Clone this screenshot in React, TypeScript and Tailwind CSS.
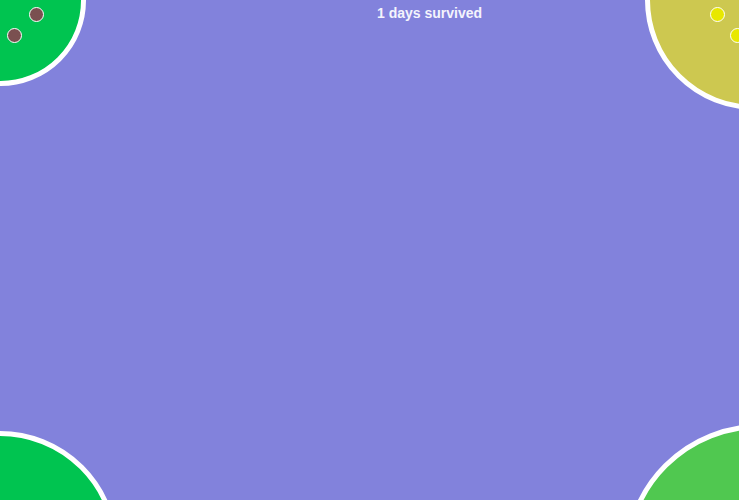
import React from 'react'

interface Blob {
  key: string
  className: string
}

const blobs: Blob[] = [
  { key: 'tl', className: 'left-[-85px] top-[-85px] w-[171px] h-[171px] bg-[#00c450]' },
  { key: 'tr', className: 'left-[645px] top-[-110px] w-[220px] h-[220px] bg-[#cdc850]' },
  { key: 'bl', className: 'left-[-118px] top-[431px] w-[236px] h-[236px] bg-[#00c450]' },
  { key: 'br', className: 'left-[624px] top-[424px] w-[272px] h-[272px] bg-[#50c850]' },
]

const dots = [
  { key: 'a', className: 'left-[29px] top-[7px] bg-[#7a5050]' },
  { key: 'b', className: 'left-[7px] top-[28px] bg-[#7a5050]' },
  { key: 'c', className: 'left-[710px] top-[7px] bg-[#e8e800]' },
  { key: 'd', className: 'left-[730px] top-[28px] bg-[#e8e800]' },
]

export default function App() {
  return (
    <div className="relative w-[739px] h-[500px] overflow-hidden bg-[#8282dc] font-['Liberation_Sans',Arial,sans-serif]">
      {blobs.map(b => (
        <div key={b.key} className={`absolute rounded-full border-[5px] border-white ${b.className}`} />
      ))}
      {dots.map(d => (
        <div key={d.key} className={`absolute w-[15px] h-[15px] rounded-full border border-white ${d.className}`} />
      ))}
      <div className="absolute top-[3px] left-[377px] text-[14px] font-bold text-[#f4f4fc]">
        1 days survived
      </div>
    </div>
  )
}
